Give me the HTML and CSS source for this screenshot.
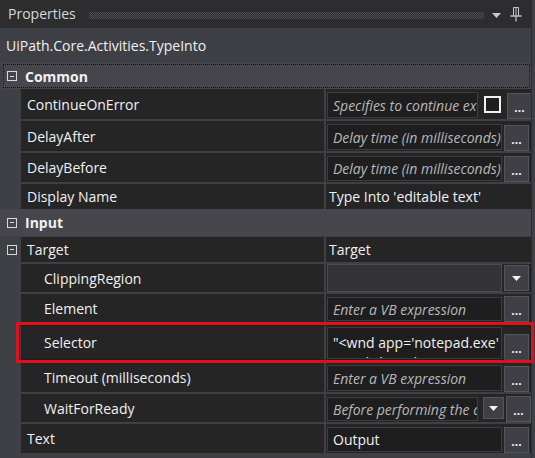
FILE: index.html
```html
<!DOCTYPE html>
<html>
<head>
<meta charset="utf-8">
<link rel="stylesheet" href="styles.css">
</head>
<body>
<div class="panel">
  <div class="titlebar">
    <span class="title">Properties</span>
    <span class="grip"></span>
    <svg class="tb-arrow" width="9" height="5" viewBox="0 0 9 5"><path d="M0 0H9L4.5 5Z" fill="#c8c8c8"/></svg>
    <svg class="tb-pin" width="12" height="16" viewBox="0 0 12 16"><path d="M3.5 1.5H8.5V9.5M3.5 1.5V9.5M6 1.5V9.5" stroke="#c8c8c8" stroke-width="1" fill="none"/><path d="M0.5 10H11.5" stroke="#c8c8c8" stroke-width="1.5"/><path d="M6 10.5V15.5" stroke="#c8c8c8" stroke-width="1.2"/></svg>
  </div>
  <div class="typename">UiPath.Core.Activities.TypeInto</div>

  <div class="grid">
    <div class="category focus">
      <span class="toggle"></span><span class="cat-label">Common</span>
    </div>

    <div class="row">
      <div class="gutter"></div>
      <div class="name">ContinueOnError</div>
      <div class="value">
        <div class="textbox narrow"><span class="ph">Specifies to continue executing</span></div>
        <span class="checkbox"></span>
        <span class="btn">...</span>
      </div>
    </div>

    <div class="row">
      <div class="gutter"></div>
      <div class="name">DelayAfter</div>
      <div class="value">
        <div class="textbox"><span class="ph">Delay time (in milliseconds)</span></div>
        <span class="btn">...</span>
      </div>
    </div>

    <div class="row h29">
      <div class="gutter"></div>
      <div class="name">DelayBefore</div>
      <div class="value">
        <div class="textbox"><span class="ph">Delay time (in milliseconds)</span></div>
        <span class="btn">...</span>
      </div>
    </div>

    <div class="row h25 nogap">
      <div class="gutter"></div>
      <div class="name">Display Name</div>
      <div class="value plain">Type Into 'editable text'</div>
    </div>

    <div class="category cat-input">
      <span class="toggle"></span><span class="cat-label">Input</span>
    </div>

    <div class="row h25">
      <div class="gutter"><span class="toggle"></span></div>
      <div class="name">Target</div>
      <div class="value plain">Target</div>
    </div>

    <div class="row h28">
      <div class="gutter"></div>
      <div class="name sub">ClippingRegion</div>
      <div class="value">
        <div class="combo"></div>
        <span class="btn drop"><svg width="9" height="5" viewBox="0 0 9 5"><path d="M0 0H9L4.5 5Z" fill="#f1f1f1"/></svg></span>
      </div>
    </div>

    <div class="row h28">
      <div class="gutter"></div>
      <div class="name sub">Element</div>
      <div class="value">
        <div class="textbox"><span class="ph">Enter a VB expression</span></div>
        <span class="btn">...</span>
      </div>
    </div>

    <div class="row h36">
      <div class="gutter"></div>
      <div class="name sub">Selector</div>
      <div class="value">
        <div class="textbox multi"><span class="val">"&lt;wnd app='notepad.exe' title='Untitled - Notepad' /&gt;</span><span class="val">&lt;wnd cls='Edit' /&gt;"</span></div>
        <span class="btn">...</span>
      </div>
    </div>

    <div class="row">
      <div class="gutter"></div>
      <div class="name sub">Timeout (milliseconds)</div>
      <div class="value">
        <div class="textbox"><span class="ph">Enter a VB expression</span></div>
        <span class="btn">...</span>
      </div>
    </div>

    <div class="row h28">
      <div class="gutter"></div>
      <div class="name sub">WaitForReady</div>
      <div class="value">
        <div class="textbox narrow"><span class="ph">Before performing the action</span></div>
        <span class="btn mini"><svg width="9" height="5" viewBox="0 0 9 5"><path d="M0 0H9L4.5 5Z" fill="#f1f1f1"/></svg></span>
        <span class="btn">...</span>
      </div>
    </div>

    <div class="row h29">
      <div class="gutter"></div>
      <div class="name">Text</div>
      <div class="value">
        <div class="textbox"><span class="val">Output</span></div>
        <span class="btn">...</span>
      </div>
    </div>
  </div>

  <div class="highlight"></div>
</div>
</body>
</html>
```

FILE: styles.css
```css
* { box-sizing: border-box; }
html, body { margin: 0; padding: 0; }
body {
  background: #3f3f46;
  font-family: "Open Sans", "Noto Sans", sans-serif;
  font-size: 14px;
  color: #f1f1f1;
  width: 535px;
  height: 458px;
  overflow: hidden;
}
.panel {
  position: relative;
  width: 532px;
  height: 458px;
  background: #3f3f46;
  border-right: 1px solid #2d2d30;
}
.titlebar {
  height: 28px;
  background: #2d2d30;
  display: flex;
  align-items: center;
  padding-left: 8px;
  padding-right: 9px;
}
.title { color: #d8d8d8; line-height: 1; }
.grip {
  flex: 1;
  height: 7px;
  margin: 2px 8px 0 13px;
  background: repeating-conic-gradient(#4e4e54 0 25%, transparent 0 50%) 0 0 / 2px 2px;
}
.tb-arrow { margin-top: 3px; margin-right: 9px; }
.tb-pin { margin-top: -1px; }
.typename {
  height: 35px;
  display: flex;
  align-items: center;
  padding-left: 6px;
  background: #3f3f46;
}
.grid { display: flex; flex-direction: column; }
.category {
  height: 26px;
  display: flex;
  align-items: center;
  background: #46464c;
  font-weight: bold;
  padding-left: 7px;
}
.category.focus {
  outline: 1px dotted #111;
  outline-offset: -2px;
  margin-left: 2px;
  padding-left: 5px;
}
.cat-input { height: 27px; margin-bottom: 1px; }
.cat-label { margin-left: 8px; }
.toggle {
  width: 10px;
  height: 10px;
  border: 1px solid #d8d8d8;
  position: relative;
  display: inline-block;
  flex: none;
}
.toggle::after {
  content: "";
  position: absolute;
  left: 2px;
  right: 2px;
  top: 3.5px;
  height: 1px;
  background: #d8d8d8;
}
.row {
  height: 30px;
  display: flex;
  margin-bottom: 2px;
}
.row.h25 { height: 25px; }
.row.h28 { height: 28px; }
.row.h29 { height: 29px; }
.row.h36 { height: 36px; }
.row.nogap { margin-bottom: 0; }
.gutter {
  width: 21px;
  display: flex;
  align-items: center;
  padding-left: 7px;
}
.name {
  width: 303px;
  background: #252526;
  display: flex;
  align-items: center;
  padding-left: 6px;
  white-space: nowrap;
}
.name.sub { padding-left: 23px; }
.value {
  width: 205px;
  margin-left: 2px;
  background: #252526;
  display: flex;
  align-items: center;
  padding: 0 2px 0 1px;
  gap: 2px;
  overflow: hidden;
}
.value.plain { padding-left: 3px; color: #f1f1f1; white-space: nowrap; }
.textbox {
  flex: 1;
  min-width: 0;
  align-self: stretch;
  margin: 3px 0 1px;
  background: #1e1e1e;
  border: 1px solid #3c3c42;
  display: flex;
  flex-direction: column;
  justify-content: center;
  padding-left: 5px;
  overflow: hidden;
  white-space: nowrap;
}
.textbox.narrow { flex: none; width: 151px; }
.textbox.narrow + .btn.mini { margin-left: 3px; }
.textbox.multi { justify-content: flex-start; padding-top: 5px; line-height: 20px; }
.ph { font-style: italic; color: #b8b8bc; }
.val { color: #f1f1f1; }
.checkbox {
  width: 17px;
  height: 17px;
  border: 2px solid #f1f1f1;
  background: #1e1e1e;
  margin: 0 4px 0 4px;
  flex: none;
}
.btn {
  width: 25px;
  height: 26px;
  flex: none;
  align-self: flex-end;
  background: #3f3f46;
  border: 1px solid #55555c;
  color: #f1f1f1;
  font-size: 12px;
  font-weight: bold;
  display: flex;
  align-items: flex-end;
  justify-content: center;
  padding-bottom: 4px;
  line-height: 1;
}
.btn.drop, .btn.mini { align-items: center; padding-bottom: 0; }
.btn.drop { align-self: center; height: 26px; }
.btn.mini { width: 21px; height: 22px; align-self: center; }
.combo {
  flex: 1;
  align-self: stretch;
  background: #333337;
  border: 1px solid #4a4a50;
}
.highlight {
  position: absolute;
  left: 16px;
  top: 322px;
  width: 518px;
  height: 41px;
  border: 3px solid #e3101c;
  box-shadow: 0 0 2px rgba(0,0,0,0.6) inset;
}
```
